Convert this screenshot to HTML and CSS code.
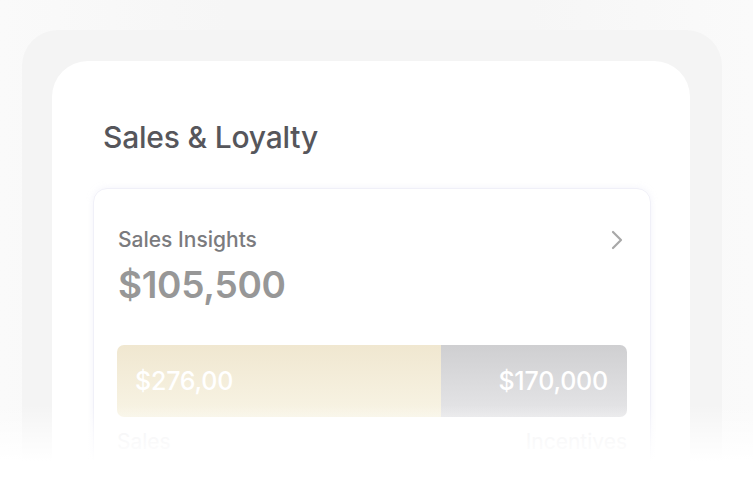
FILE: index.html
```html
<!DOCTYPE html>
<html>
<head>
<meta charset="utf-8">
<link rel="stylesheet" href="styles.css">
</head>
<body>
<div class="page">
  <div class="panel">
    <div class="card">
      <h1 class="title">Sales &amp; Loyalty</h1>
      <div class="insights">
        <div class="head">
          <span class="label">Sales Insights</span>
          <svg class="chev" width="14" height="20" viewBox="0 0 14 20"><path d="M3 2 L11 10 L3 18" fill="none" stroke="#a8a8a8" stroke-width="2.2" stroke-linecap="round" stroke-linejoin="round"/></svg>
        </div>
        <div class="amount">$105,500</div>
        <div class="bar">
          <div class="seg sales"><span>$276,00</span></div>
          <div class="seg inc"><span>$170,000</span></div>
        </div>
        <div class="legend"><span>Sales</span><span>Incentives</span></div>
      </div>
    </div>
  </div>
  <div class="fade"></div>
</div>
</body>
</html>
```
FILE: styles.css
```css
* { box-sizing: border-box; }
html, body { margin: 0; padding: 0; background: #fff; }
.page {
  position: relative;
  width: 753px;
  height: 477px;
  overflow: hidden;
  background: linear-gradient(90deg, #fafafa 0%, #f6f6f6 30%, #f6f6f6 70%, #fafafa 100%);
  padding: 30px 31px 0 22px;
  font-family: "Inter", "Liberation Sans", sans-serif;
}
.panel {
  background: #f4f4f4;
  border-radius: 36px 36px 0 0;
  padding: 31px 32px 0 30px;
  height: 480px;
}
.card {
  background: #fff;
  border-radius: 36px 36px 0 0;
  padding: 58px 39px 0 41px;
  height: 460px;
}
.title {
  margin: 0 0 33px 10px;
  font-size: 30px;
  line-height: 36px;
  font-weight: 500;
  color: #56565b;
  letter-spacing: -0.2px;
}
.insights {
  border: 1px solid #f0f0f8;
  border-radius: 14px;
  box-shadow: 0 0 6px rgba(220, 220, 240, 0.35);
  padding: 37px 23px 0 23px;
  height: 300px;
}
.head {
  display: flex;
  justify-content: space-between;
  align-items: center;
  padding-left: 1px;
  padding-right: 3px;
}
.label {
  font-size: 21px;
  line-height: 28px;
  font-weight: 500;
  color: #7b7b7e;
}
.amount {
  margin-top: 9px;
  padding-left: 1px;
  font-size: 37px;
  line-height: 44px;
  font-weight: 600;
  color: #979797;
  letter-spacing: -0.3px;
}
.bar {
  margin-top: 38px;
  display: flex;
  height: 72px;
  border-radius: 7px;
  overflow: hidden;
}
.seg {
  display: flex;
  align-items: center;
  font-size: 25px;
  font-weight: 500;
  color: #fff;
  letter-spacing: -0.2px;
}
.sales {
  width: 324px;
  padding-left: 18px;
  background: linear-gradient(180deg, #f0e7d0 0%, #f8f4e5 100%);
}
.inc {
  flex: 1;
  justify-content: flex-end;
  padding-right: 19px;
  background: linear-gradient(180deg, #cfcfd1 0%, #e6e6e8 100%);
}
.legend {
  display: flex;
  justify-content: space-between;
  margin-top: 12px;
  font-size: 21px;
  color: #eeeef0;
}
.fade {
  position: absolute;
  left: 0;
  right: 0;
  bottom: 0;
  height: 72px;
  background: linear-gradient(180deg, rgba(255,255,255,0) 0%, rgba(255,255,255,0.6) 45%, #fff 78%);
}
```
